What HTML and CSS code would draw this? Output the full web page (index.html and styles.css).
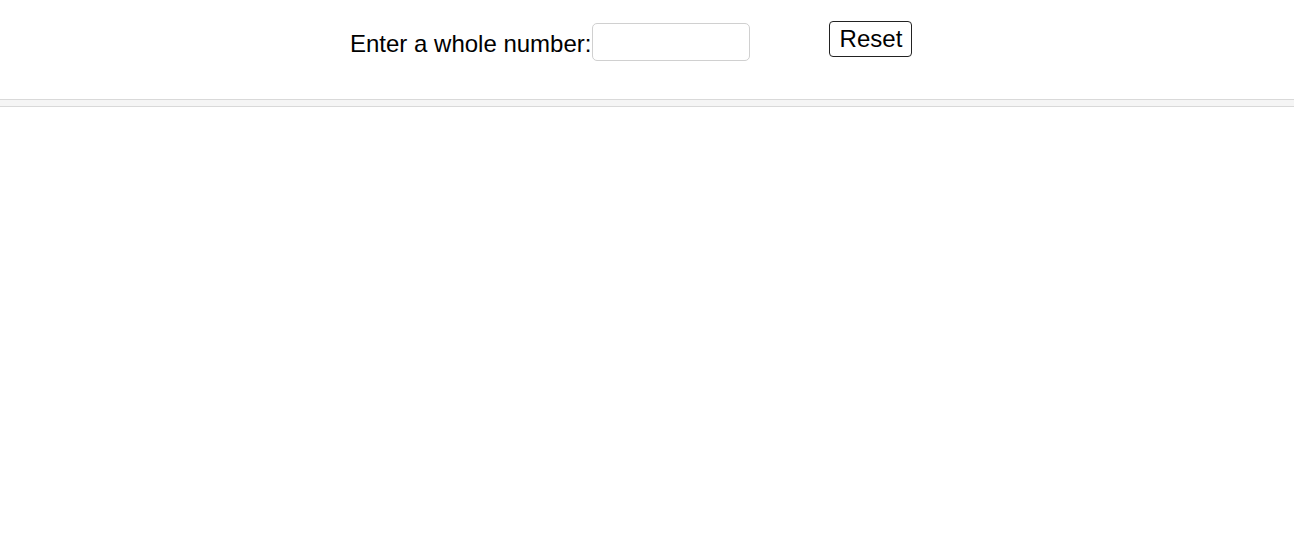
FILE: index.html
```html
<!DOCTYPE html>
<html>
<head>
<meta charset="utf-8">
<link rel="stylesheet" href="styles.css">
</head>
<body>
<div class="panel">
  <div class="controls">
    <label class="field">
      <span class="label-text">Enter a whole number:</span>
      <input class="num-input" type="text">
    </label>
    <button class="reset-btn">Reset</button>
  </div>
</div>
<div class="divider"></div>
</body>
</html>
```

FILE: styles.css
```css
html, body {
  margin: 0;
  padding: 0;
  background: #ffffff;
  font-family: "Liberation Sans", Arial, sans-serif;
}

.panel {
  height: 99px;
}

.controls {
  display: flex;
  align-items: flex-start;
  padding-left: 350px;
  padding-top: 21px;
}

.field {
  display: flex;
  align-items: center;
  margin-top: 0;
}

.label-text {
  font-size: 24px;
  color: #000;
  line-height: 38px;
  padding-top: 4px;
}

.num-input {
  box-sizing: border-box;
  width: 158px;
  height: 38px;
  margin: 0 0 0 1px;
  border: 1px solid #d0d0d0;
  border-radius: 5px;
  font-size: 20px;
  font-family: inherit;
  outline: none;
}

.reset-btn {
  box-sizing: border-box;
  margin-left: 79px;
  width: 83px;
  height: 36px;
  padding: 0 0 0 0;
  border: 1px solid #222;
  border-radius: 4px;
  background: #fff;
  font-family: inherit;
  font-size: 24px;
  color: #000;
  line-height: 1;
}

.divider {
  width: 1294px;
  height: 8px;
  box-sizing: border-box;
  border-top: 1px solid #d9d9d9;
  border-bottom: 1px solid #d9d9d9;
  background: #f5f5f5;
}
```
